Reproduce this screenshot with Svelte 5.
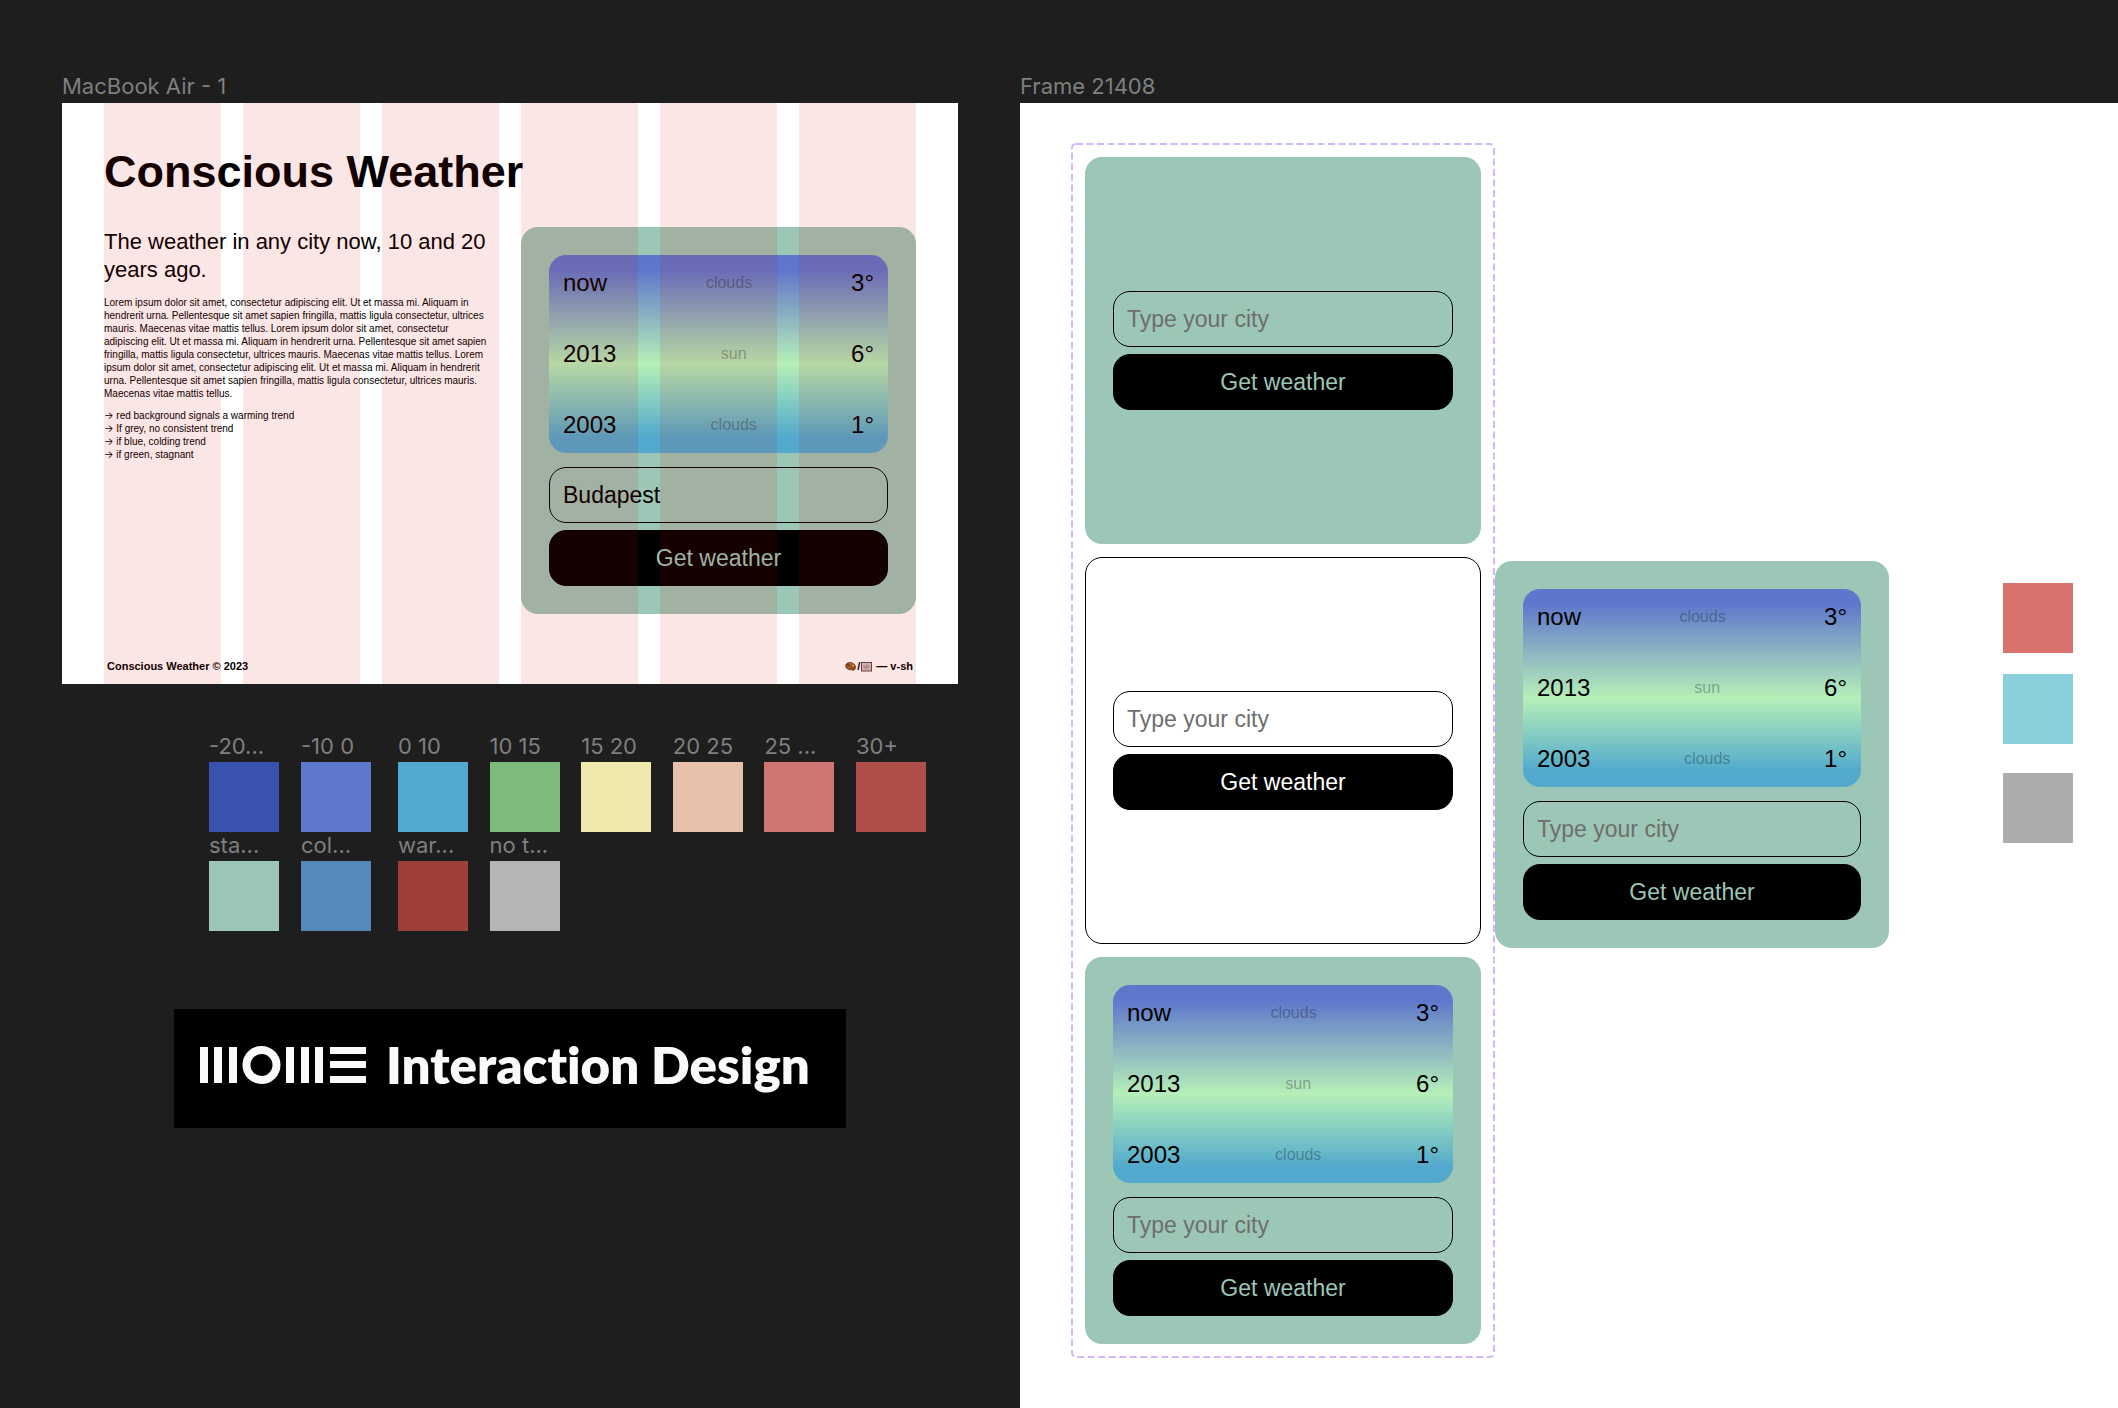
<script>
  const readings = [
    { year: 'now', sky: 'clouds', degrees: '3°' },
    { year: '2013', sky: 'sun', degrees: '6°' },
    { year: '2003', sky: 'clouds', degrees: '1°' }
  ];

  const temperatureColors = [
    { name: '-20...', color: '#3953ae' },
    { name: '-10 0', color: '#5e78cc' },
    { name: '0 10', color: '#52a9cd' },
    { name: '10 15', color: '#7cbb7c' },
    { name: '15 20', color: '#eee8ac' },
    { name: '20 25', color: '#e7c1a9' },
    { name: '25 ...', color: '#d07672' },
    { name: '30+', color: '#b04e49' },
    { name: 'sta...', color: '#9cc6b5' },
    { name: 'col...', color: '#568abb' },
    { name: 'war...', color: '#9e3f3a' },
    { name: 'no t...', color: '#b5b5b5' }
  ];

  const looseColors = ['#d8706b', '#8acfdc', '#abadac'];

  const lorem = [
    'Lorem ipsum dolor sit amet, consectetur adipiscing elit. Ut et massa mi. Aliquam in',
    'hendrerit urna. Pellentesque sit amet sapien fringilla, mattis ligula consectetur, ultrices',
    'mauris. Maecenas vitae mattis tellus. Lorem ipsum dolor sit amet, consectetur',
    'adipiscing elit. Ut et massa mi. Aliquam in hendrerit urna. Pellentesque sit amet sapien',
    'fringilla, mattis ligula consectetur, ultrices mauris. Maecenas vitae mattis tellus. Lorem',
    'ipsum dolor sit amet, consectetur adipiscing elit. Ut et massa mi. Aliquam in hendrerit',
    'urna. Pellentesque sit amet sapien fringilla, mattis ligula consectetur, ultrices mauris.',
    'Maecenas vitae mattis tellus.'
  ];

  const legend = [
    'red background signals a warming trend',
    'If grey, no consistent trend',
    'if blue, colding trend',
    'if green, stagnant'
  ];
</script>

{#snippet weatherCard(showReadings, plain, city)}
  <form class="card" class:plain onsubmit={(e) => e.preventDefault()}>
    {#if showReadings}
      <table class="readings">
        <tbody>
          {#each readings as r}
            <tr>
              <th scope="row">{r.year}</th>
              <td class="sky">{r.sky}</td>
              <td>{r.degrees}</td>
            </tr>
          {/each}
        </tbody>
      </table>
    {/if}
    <div class="controls">
      <input type="text" aria-label="City" placeholder="Type your city" value={city} />
      <button type="submit">Get weather</button>
    </div>
  </form>
{/snippet}

<main class="canvas">
  <section class="left">
    <h2 class="frame-label">MacBook Air - 1</h2>
    <article class="artboard">
      <h1>Conscious Weather</h1>
      <div class="split">
        <div class="intro">
          <p class="lead">The weather in any city now, 10 and 20<br />years ago.</p>
          <p class="body">
            {#each lorem as line}{line}<br />{/each}
          </p>
          <ul>
            {#each legend as item}<li><span class="arrow">→</span> {item}</li>{/each}
          </ul>
        </div>
        {@render weatherCard(true, false, 'Budapest')}
      </div>
      <footer>
        <span>Conscious Weather © 2023</span>
        <span class="credit">
          <svg viewBox="0 0 11 11" width="11" height="11" aria-hidden="true">
            <path d="M1 3.4C2.4.9 6.600.8 9.200 3.200c2 1.900 1.900 4.700-.2 5.800-1.400.7-2.100-.4-3.500-.3C3 8.900-.6 6.600 1 3.400Z" fill="#915a24" stroke="#54301a" stroke-width=".7" />
            <circle cx="3" cy="3.800" r=".8" fill="#3c2a1c" />
            <circle cx="5.500" cy="3" r=".8" fill="#cf9a4c" />
            <circle cx="8" cy="4.600" r=".8" fill="#f4e6d8" />
            <circle cx="3.600" cy="6.400" r=".7" fill="#c07a35" />
            <circle cx="7.800" cy="7.500" r=".8" fill="#b52c20" />
          </svg>
          <span>/</span>
          <svg viewBox="0 0 11 11" width="11" height="11" aria-hidden="true">
            <rect x=".5" y="1.500" width="10" height="8.500" fill="#d5c0c2" stroke="#5e4a4c" />
            <path d="M4 4.300 2.700 5.800 4 7.300M7 4.300l1.300 1.500L7 7.300M6 3.900 5 7.700" fill="none" stroke="#6b585a" stroke-width=".7" />
          </svg>
          <span class="sign">— v-sh</span>
        </span>
      </footer>
      <div class="guides" aria-hidden="true">
        {#each Array(6) as _}<i></i>{/each}
      </div>
    </article>

    <ul class="swatches">
      {#each temperatureColors as s}
        <li>
          <span class="swatch-label">{s.name}</span>
          <span class="swatch" style:background={s.color}></span>
        </li>
      {/each}
    </ul>

    <div class="logo">
      <svg viewBox="0 0 166 40" width="166" height="40" role="img" aria-label="MOME">
        <g fill="#fafafa">
          <rect x="0" y="2" width="8" height="36" />
          <rect x="14" y="2" width="8" height="36" />
          <rect x="29" y="2" width="8" height="36" />
          <rect x="86" y="2" width="8" height="36" />
          <rect x="101" y="2" width="8" height="36" />
          <rect x="115" y="2" width="8" height="36" />
          <rect x="130" y="2" width="36" height="7" />
          <rect x="130" y="16" width="36" height="7" />
          <rect x="130" y="31" width="36" height="7" />
        </g>
        <circle cx="61.500" cy="20" r="15" fill="none" stroke="#fafafa" stroke-width="8" />
      </svg>
      <span>Interaction Design</span>
    </div>
  </section>

  <section class="right">
    <h2 class="frame-label">Frame 21408</h2>
    <div class="board">
      <div class="variants">
        {@render weatherCard(false, false, '')}
        {@render weatherCard(false, true, '')}
        {@render weatherCard(true, false, '')}
        <svg class="outline" aria-hidden="true">
          <rect x="1" y="1" rx="4" />
        </svg>
      </div>
      <div class="instance">
        {@render weatherCard(true, false, '')}
      </div>
      <ul class="loose">
        {#each looseColors as color}
          <li class="swatch" style:background={color}></li>
        {/each}
      </ul>
    </div>
  </section>
</main>

<style>
  :global(body) {
    background: #1e1e1e;
  }

  .canvas,
  .canvas * {
    box-sizing: border-box;
  }

  .canvas {
    display: grid;
    grid-template-columns: 896fr 1098fr;
    gap: 62px;
    min-height: 100vh;
    padding: 72px 0 0 62px;
    overflow: hidden;
    color: #000;
    font-family: 'Liberation Sans', Arial, sans-serif;
  }

  h1,
  h2,
  p,
  ul {
    margin: 0;
    padding: 0;
    list-style: none;
  }

  .frame-label,
  .swatch-label {
    color: #7f7f7f;
    font-family: Inter, sans-serif;
    font-size: 22px;
    font-weight: 400;
    white-space: nowrap;
  }

  .frame-label {
    margin-bottom: 3px;
    line-height: 28px;
  }

  .left,
  .right {
    display: flex;
    flex-direction: column;
    min-width: 0;
  }

  .artboard {
    position: relative;
    padding: 41px 42px 11px;
    background: #fff;
  }

  h1 {
    margin-bottom: 27px;
    font-size: 45px;
    font-weight: 700;
    line-height: 56px;
  }

  .split {
    display: grid;
    grid-template-columns: 1fr 1fr;
    gap: 22px;
  }

  .intro {
    padding-top: 1px;
    font-size: 10px;
    line-height: 13px;
    white-space: nowrap;
  }

  .lead {
    margin-bottom: 12px;
    font-size: 22px;
    line-height: 28px;
  }

  .body {
    margin-bottom: 9px;
  }

  .arrow {
    font-family: Inter, sans-serif;
  }

  footer {
    display: flex;
    justify-content: space-between;
    margin-top: 45px;
    padding: 0 3px;
    font-size: 11px;
    font-weight: 700;
    line-height: 14px;
  }

  .credit {
    display: flex;
    align-items: center;
    gap: 1px;
  }

  .sign {
    margin-left: 3px;
  }

  .guides {
    position: absolute;
    inset: 0 42px;
    display: grid;
    grid-template-columns: repeat(6, 1fr);
    gap: 22px;
    pointer-events: none;
  }

  .guides i {
    background: rgba(208, 5, 0, 0.1);
  }

  .card {
    display: flex;
    flex-direction: column;
    justify-content: center;
    gap: 14px;
    min-height: 387px;
    padding: 28px;
    border-radius: 17px;
    background: #9cc6b5;
    color: #9cc6b5;
  }

  .card.plain {
    border: 1px solid #000;
    padding: 27px;
    background: #fff;
    color: #fff;
  }

  .readings {
    display: block;
    padding: 14px;
    border-radius: 17px;
    background: linear-gradient(#5e76cc 7%, #b5efb8 55%, #52a9cd 92%);
    color: #000;
    font-size: 24px;
    line-height: 28px;
  }

  .readings tbody {
    display: flex;
    flex-direction: column;
    gap: 43px;
  }

  .readings tr {
    display: flex;
    justify-content: space-between;
  }

  .readings th,
  .readings td {
    padding: 0;
    font-weight: 400;
  }

  .readings .sky {
    color: rgba(0, 0, 0, 0.3);
    font-size: 16px;
  }

  .controls {
    display: flex;
    flex-direction: column;
    gap: 7px;
  }

  input,
  button {
    width: 100%;
    height: 56px;
    border: 1px solid #000;
    border-radius: 17px;
    font-family: inherit;
    font-size: 23px;
    line-height: 28px;
  }

  input {
    padding: 0 13px;
    background: transparent;
    color: #000;
  }

  input::placeholder {
    color: #6e6e6e;
    opacity: 1;
  }

  button {
    background: #000;
    color: inherit;
  }

  .swatches {
    display: grid;
    grid-template-columns: 92px 97px repeat(5, 1fr) 70px;
    margin-top: 49px;
    padding: 0 32px 0 147px;
  }

  .swatches li {
    display: flex;
    flex-direction: column;
    gap: 3px;
    width: 70px;
  }

  .swatch-label {
    line-height: 26px;
  }

  .swatch {
    width: 70px;
    height: 70px;
  }

  .logo {
    display: flex;
    align-items: center;
    gap: 20px;
    margin: 78px 112px 0;
    padding: 30px 26px 37px;
    background: #000;
    color: #fafafa;
    font-family: Lato, sans-serif;
    font-size: 51px;
    font-variant-ligatures: none;
    font-weight: 800;
    line-height: 52px;
    white-space: nowrap;
  }

  .logo svg {
    flex: none;
  }

  .board {
    display: flex;
    flex: 1;
    align-items: flex-start;
    padding: 40px 45px 48px 51px;
    background: #fff;
  }

  .variants {
    position: relative;
    z-index: 1;
    display: flex;
    flex: 0 0 424px;
    flex-direction: column;
    gap: 13px;
    padding: 14px;
  }

  .outline {
    position: absolute;
    inset: 0;
    width: 100%;
    height: 100%;
    pointer-events: none;
  }

  .outline rect {
    width: calc(100% - 2px);
    height: calc(100% - 2px);
    fill: none;
    stroke: rgba(151, 71, 255, 0.4);
    stroke-width: 2;
    stroke-dasharray: 7 3.5;
  }

  .instance {
    flex: 0 0 394px;
    margin-top: 418px;
  }

  .loose {
    display: grid;
    gap: 21px;
    margin-top: 440px;
    margin-left: auto;
  }

  .loose .swatch:last-child {
    margin-top: 8px;
  }
</style>
